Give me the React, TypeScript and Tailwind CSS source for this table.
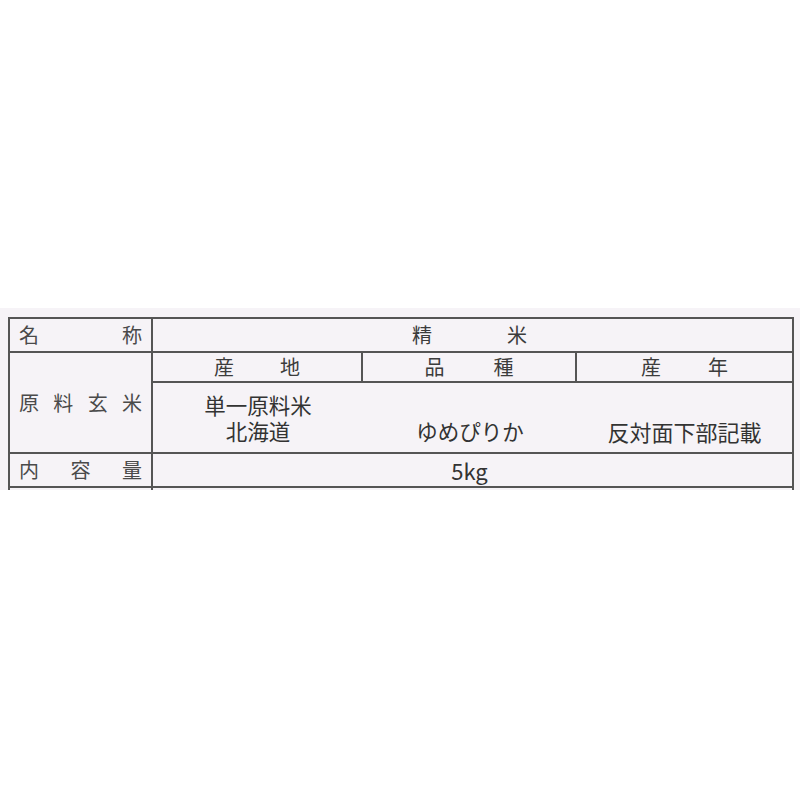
import React from "react";

const font = { fontFamily: '"Noto Sans CJK JP", "Noto Sans", sans-serif' };

function Spread({ chars }: { chars: string[] }) {
  return (
    <div className="flex h-full items-center justify-between pl-[9px] pr-[9px] text-[20px] leading-none text-[#4a4a4a]">
      {chars.map((c, i) => (
        <span key={i}>{c}</span>
      ))}
    </div>
  );
}

function Pair({ a, b, gap }: { a: string; b: string; gap: string }) {
  return (
    <div className={`flex h-full items-center justify-center ${gap} text-[20px] leading-none text-[#3c3c3c]`}>
      <span>{a}</span>
      <span>{b}</span>
    </div>
  );
}

export default function App() {
  return (
    <div className="h-[800px] w-[800px] bg-white" style={font}>
      <div className="h-[308px]" />
      <div className="h-[182px] overflow-hidden bg-[#f6f3f7] pt-[9px] pl-[8px]">
        <div className="grid w-[786px] grid-cols-[141px_208px_212px_215px] grid-rows-[32px_28px_69px_32px_40px] gap-[2px] bg-[#555555] p-[2px]">
          <div className="bg-[#f6f3f7]">
            <Spread chars={["名", "称"]} />
          </div>
          <div className="col-span-3 bg-[#f6f3f7]">
            <div className="flex h-full items-center justify-center gap-[75px] pr-[6px] text-[20px] leading-none text-[#3c3c3c]">
              <span>精</span>
              <span>米</span>
            </div>
          </div>

          <div className="row-span-2 bg-[#f6f3f7]">
            <Spread chars={["原", "料", "玄", "米"]} />
          </div>
          <div className="bg-[#f6f3f7]">
            <Pair a="産" b="地" gap="gap-[46px]" />
          </div>
          <div className="bg-[#f6f3f7]">
            <Pair a="品" b="種" gap="gap-[49px]" />
          </div>
          <div className="bg-[#f6f3f7]">
            <Pair a="産" b="年" gap="gap-[47px]" />
          </div>

          <div className="col-span-3 grid grid-cols-[210px_214px_215px] bg-[#f6f3f7] text-[#333333]">
            <div className="flex flex-col items-center justify-center pt-[1px] text-[21.5px] leading-[26px]">
              <span>単一原料米</span>
              <span>北海道</span>
            </div>
            <div className="flex items-end justify-center pb-[8px] text-[21.5px] leading-[26px]">
              <span>ゆめぴりか</span>
            </div>
            <div className="flex items-end justify-center pb-[8px] text-[22px] leading-[26px]">
              <span>反対面下部記載</span>
            </div>
          </div>

          <div className="bg-[#f6f3f7]">
            <Spread chars={["内", "容", "量"]} />
          </div>
          <div className="col-span-3 flex items-center justify-center bg-[#f6f3f7] pr-[6px] text-[22px] leading-none text-[#333333]">
            <span>5kg</span>
          </div>

          <div className="bg-[#f6f3f7]" />
          <div className="col-span-3 bg-[#f6f3f7]" />
        </div>
      </div>
    </div>
  );
}
